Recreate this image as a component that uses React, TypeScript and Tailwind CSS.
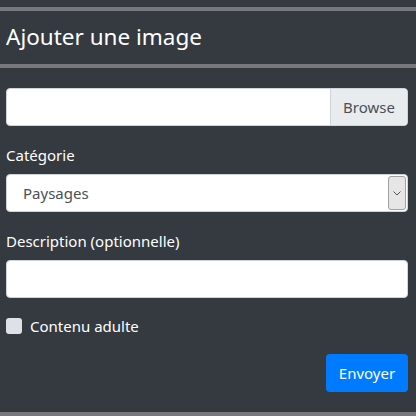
export default function App() {
  return (
    <div
      className="w-[416px] h-[416px] bg-[#343a40] text-white overflow-hidden flex flex-col"
      style={{ fontFamily: '"Noto Sans", "Open Sans", sans-serif' }}
    >
      <div className="h-[7px]" />
      <div className="h-[4px] bg-[#77787b]" />
      <div className="h-[53px] flex items-center px-[6px]">
        <h1 className="text-[22.5px] leading-none">Ajouter une image</h1>
      </div>
      <div className="h-[4px] bg-[#77787b]" />
      <form className="flex-1 flex flex-col pl-[6px] pr-[8px] pt-[20px]">
        <div className="h-[38px] flex rounded-[4px] bg-white border border-[#ced4da] overflow-hidden">
          <div className="flex-1" />
          <div className="w-[77px] bg-[#e9ecef] border-l border-[#ced4da] flex items-center justify-center text-[#495057] text-[15px]">
            Browse
          </div>
        </div>
        <label className="mt-[18px] text-[15px] leading-[22px]">Catégorie</label>
        <div className="mt-[8px] h-[38px] flex rounded-[4px] bg-white border border-[#ced4da] overflow-hidden">
          <div className="flex-1 flex items-center pl-[16px] text-[#495057] text-[15px]">Paysages</div>
          <div className="w-[18px] my-[1px] mr-[1px] bg-[#e6e6e6] border border-[#a0a0a0] rounded-[3px] flex items-center justify-center">
            <svg width="8" height="5" viewBox="0 0 8 5">
              <path d="M0.5 0.5 L4 4 L7.5 0.5" fill="none" stroke="#555" strokeWidth="1" />
            </svg>
          </div>
        </div>
        <label className="mt-[18px] text-[15px] leading-[22px]">Description (optionnelle)</label>
        <div className="mt-[8px] h-[38px] rounded-[4px] bg-white border border-[#ced4da]" />
        <div className="mt-[17px] flex items-center gap-[8px]">
          <div className="w-[16px] h-[16px] rounded-[3px] bg-[#dee2e6]" />
          <span className="text-[15px] leading-[22px]">Contenu adulte</span>
        </div>
        <div className="mt-[17px] flex justify-end">
          <button type="button" className="h-[38px] w-[82px] rounded-[4px] bg-[#007bff] text-white text-[15px]">
            Envoyer
          </button>
        </div>
      </form>
      <div className="h-[4px] bg-[#77787b]" />
    </div>
  )
}
